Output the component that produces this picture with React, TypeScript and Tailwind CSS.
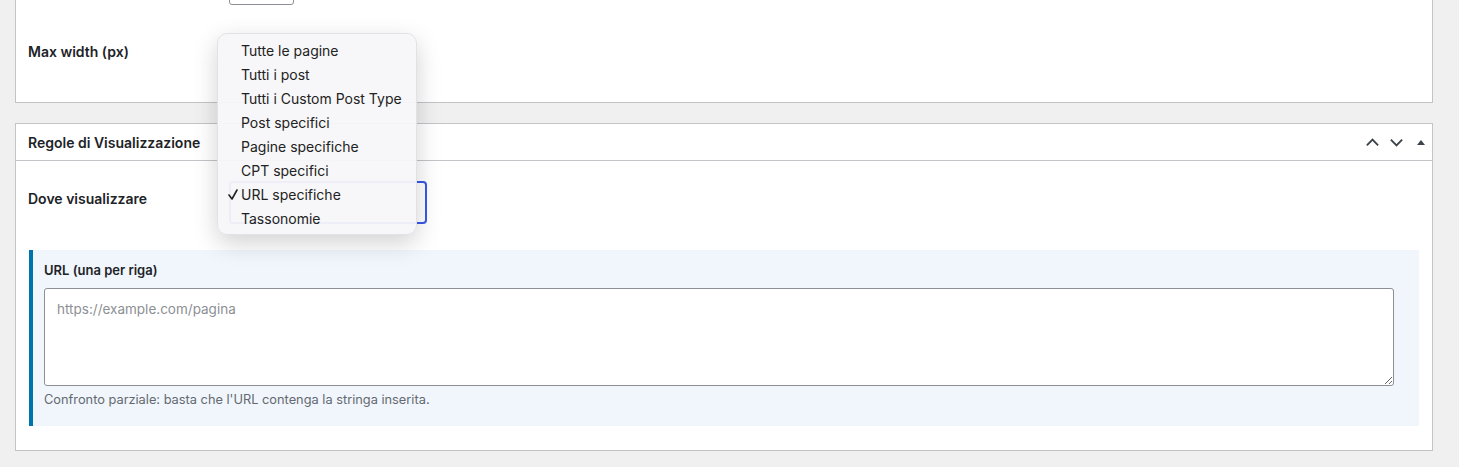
import React from 'react';

const options = [
  'Tutte le pagine',
  'Tutti i post',
  'Tutti i Custom Post Type',
  'Post specifici',
  'Pagine specifiche',
  'CPT specifici',
  'URL specifiche',
  'Tassonomie',
];

const selected = 'URL specifiche';

const App: React.FC = () => {
  return (
    <main
      className="relative h-[467px] w-full overflow-hidden bg-[#f0f0f1] pl-[15px] pr-[26px] text-[#1d2327]"
      style={{ fontFamily: 'Inter, "Noto Sans", "Liberation Sans", sans-serif' }}
    >
      {/* settings box, top cut off */}
      <section className="-mt-[29px] border border-[#c3c4c7] bg-white">
        <div className="pl-[213px]">
          <div className="h-[33px] w-[65px] rounded-[3px] border border-[#8c8f94] bg-white" />
        </div>
        <div className="flex h-[97px] items-center px-[12px] pb-[4px]">
          <span className="text-[14px] font-semibold">Max width (px)</span>
        </div>
      </section>

      {/* display rules box */}
      <section className="mt-[20px] border border-[#c3c4c7] bg-white">
        <header className="flex h-[37px] items-center justify-between border-b border-[#c3c4c7] pl-[12px] pr-[3px]">
          <h2 className="text-[14px] font-semibold">Regole di Visualizzazione</h2>
          <div className="flex items-center gap-[9px] text-[#3c434a]">
            <svg width="15" height="15" viewBox="0 0 16 16" fill="none" stroke="currentColor" strokeWidth="2">
              <path d="M2 11l6-6 6 6" />
            </svg>
            <svg width="15" height="15" viewBox="0 0 16 16" fill="none" stroke="currentColor" strokeWidth="2">
              <path d="M2 5l6 6 6-6" />
            </svg>
            <svg width="16" height="16" viewBox="0 0 16 16" fill="currentColor">
              <path d="M4 11l4-5 4 5z" />
            </svg>
          </div>
        </header>

        <div className="flex items-start px-[12px] pt-[20px]">
          <span className="mt-[7px] w-[201px] text-[14px] font-semibold">Dove visualizzare</span>
          <div className="h-[43px] w-[198px] rounded-[4px] border-2 border-[#3858e9]" />
        </div>

        <div className="mx-[13px] mb-[24px] mt-[26px] border-l-4 border-[#0073aa] bg-[#f0f6fc] pb-[18px] pl-[11px] pr-[25px] pt-[12px]">
          <div className="text-[13px] font-semibold leading-[16px]">URL (una per riga)</div>
          <textarea
            readOnly
            placeholder="https://example.com/pagina"
            className="mt-[10px] block h-[98px] w-full rounded-[3px] border border-[#8c8f94] bg-white px-[12px] py-[10px] text-[13.5px] leading-[20px] outline-none placeholder:text-[#8c8f94]"
          />
          <p className="mt-[6px] text-[12.8px] leading-[16px] text-[#646970]">
            Confronto parziale: basta che l'URL contenga la stringa inserita.
          </p>
        </div>
      </section>

      {/* open native select menu */}
      <div className="absolute left-[217px] top-[33px] w-[200px] rounded-[10px] border border-[#e2e2e6] bg-[#f7f7f9]/95 py-[4px] shadow-[0_8px_24px_rgba(0,0,0,0.18)]">
        {options.map((o) => (
          <div key={o} className="relative flex h-[24px] items-center pl-[23px] text-[14px] text-[#222]">
            {o === selected && (
              <svg
                className="absolute left-[10px] top-[7px]"
                width="10"
                height="11"
                viewBox="0 0 10 11"
                fill="none"
                stroke="#222"
                strokeWidth="1.6"
                strokeLinecap="round"
                strokeLinejoin="round"
              >
                <path d="M1 6l3 4 5-9" />
              </svg>
            )}
            {o}
          </div>
        ))}
      </div>
    </main>
  );
};

export default App;
